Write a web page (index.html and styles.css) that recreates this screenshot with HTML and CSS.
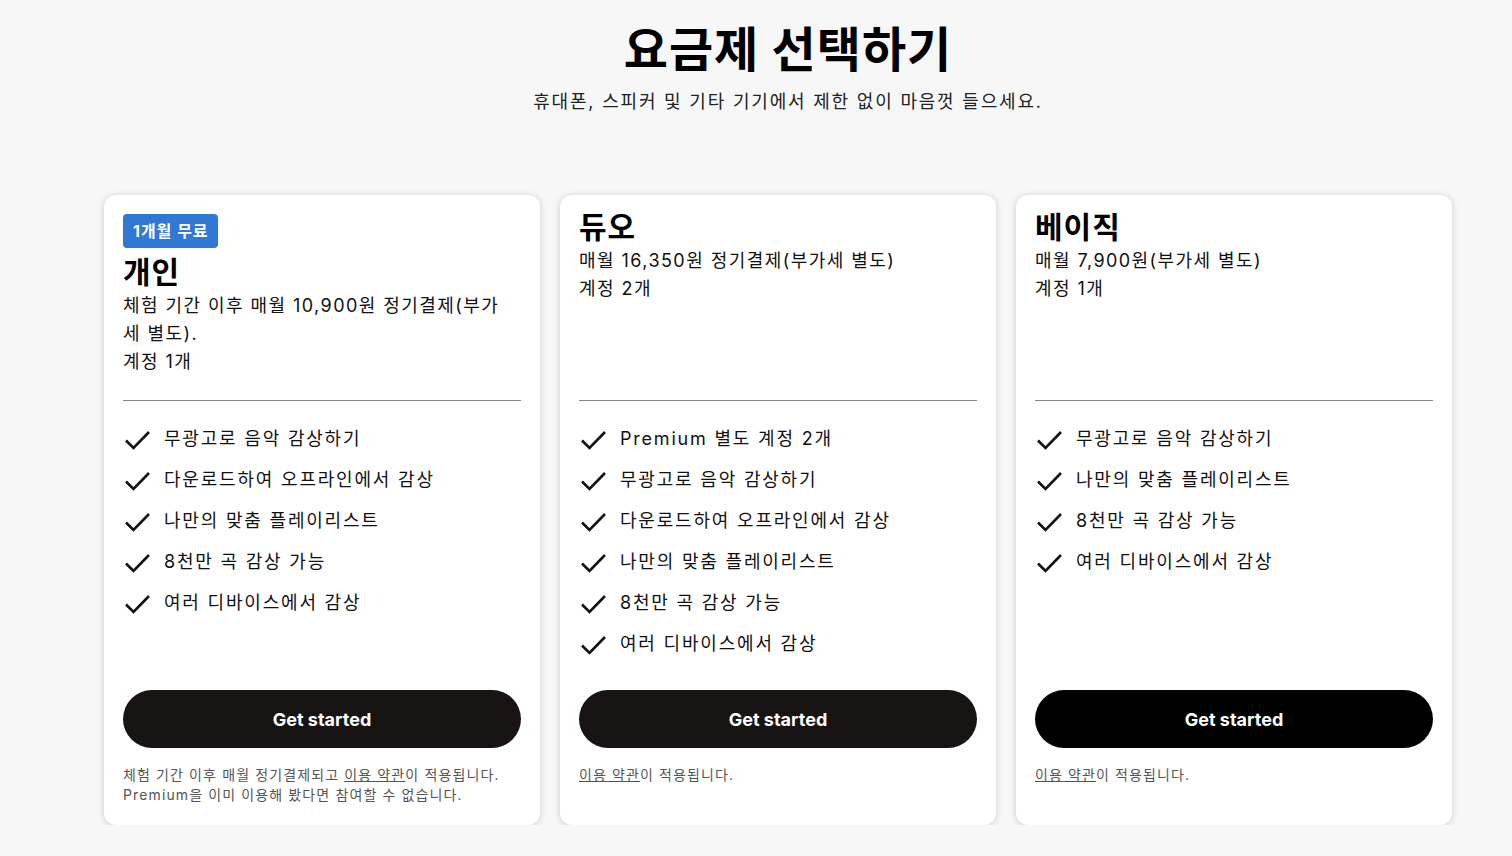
FILE: index.html
```html
<!DOCTYPE html>
<html lang="ko">
<head>
    <meta charset="UTF-8">
    <meta name="viewport" content="width=device-width, initial-scale=1.0">
    <title>요금제 선택하기</title>
    <link rel="stylesheet" href="styles.css">
</head>
<body>
    <header class="page-head">
        <h1>요금제 선택하기</h1>
        <p class="lead">휴대폰, 스피커 및 기타 기기에서 제한 없이 마음껏 들으세요.</p>
    </header>

    <main class="plans">
        <!-- 개인 -->
        <section class="plan">
            <div class="plan-head">
                <span class="badge">1개월 무료</span>
                <h2>개인</h2>
                <p class="plan-desc">체험 기간 이후 매월 10,900원 정기결제(부가세 별도).</p>
                <p class="plan-desc">계정 1개</p>
            </div>
            <ul class="features">
                <li><svg class="check" viewBox="0 0 28 22"><path d="M3 11.5l7.5 7.5L26 3"/></svg>무광고로 음악 감상하기</li>
                <li><svg class="check" viewBox="0 0 28 22"><path d="M3 11.5l7.5 7.5L26 3"/></svg>다운로드하여 오프라인에서 감상</li>
                <li><svg class="check" viewBox="0 0 28 22"><path d="M3 11.5l7.5 7.5L26 3"/></svg>나만의 맞춤 플레이리스트</li>
                <li><svg class="check" viewBox="0 0 28 22"><path d="M3 11.5l7.5 7.5L26 3"/></svg>8천만 곡 감상 가능</li>
                <li><svg class="check" viewBox="0 0 28 22"><path d="M3 11.5l7.5 7.5L26 3"/></svg>여러 디바이스에서 감상</li>
            </ul>
            <div class="plan-foot">
                <button type="button">Get started</button>
                <p class="terms">체험 기간 이후 매월 정기결제되고 <a href="#">이용 약관</a>이 적용됩니다.<br>Premium을 이미 이용해 봤다면 참여할 수 없습니다.</p>
            </div>
        </section>

        <!-- 듀오 -->
        <section class="plan">
            <div class="plan-head">
                <h2>듀오</h2>
                <p class="plan-desc">매월 16,350원 정기결제(부가세 별도)</p>
                <p class="plan-desc">계정 2개</p>
            </div>
            <ul class="features">
                <li><svg class="check" viewBox="0 0 28 22"><path d="M3 11.5l7.5 7.5L26 3"/></svg>Premium 별도 계정 2개</li>
                <li><svg class="check" viewBox="0 0 28 22"><path d="M3 11.5l7.5 7.5L26 3"/></svg>무광고로 음악 감상하기</li>
                <li><svg class="check" viewBox="0 0 28 22"><path d="M3 11.5l7.5 7.5L26 3"/></svg>다운로드하여 오프라인에서 감상</li>
                <li><svg class="check" viewBox="0 0 28 22"><path d="M3 11.5l7.5 7.5L26 3"/></svg>나만의 맞춤 플레이리스트</li>
                <li><svg class="check" viewBox="0 0 28 22"><path d="M3 11.5l7.5 7.5L26 3"/></svg>8천만 곡 감상 가능</li>
                <li><svg class="check" viewBox="0 0 28 22"><path d="M3 11.5l7.5 7.5L26 3"/></svg>여러 디바이스에서 감상</li>
            </ul>
            <div class="plan-foot">
                <button type="button">Get started</button>
                <p class="terms"><a href="#">이용 약관</a>이 적용됩니다.</p>
            </div>
        </section>

        <!-- 베이직 -->
        <section class="plan">
            <div class="plan-head">
                <h2>베이직</h2>
                <p class="plan-desc">매월 7,900원(부가세 별도)</p>
                <p class="plan-desc">계정 1개</p>
            </div>
            <ul class="features">
                <li><svg class="check" viewBox="0 0 28 22"><path d="M3 11.5l7.5 7.5L26 3"/></svg>무광고로 음악 감상하기</li>
                <li><svg class="check" viewBox="0 0 28 22"><path d="M3 11.5l7.5 7.5L26 3"/></svg>나만의 맞춤 플레이리스트</li>
                <li><svg class="check" viewBox="0 0 28 22"><path d="M3 11.5l7.5 7.5L26 3"/></svg>8천만 곡 감상 가능</li>
                <li><svg class="check" viewBox="0 0 28 22"><path d="M3 11.5l7.5 7.5L26 3"/></svg>여러 디바이스에서 감상</li>
            </ul>
            <div class="plan-foot">
                <button type="button" class="btn-dark">Get started</button>
                <p class="terms"><a href="#">이용 약관</a>이 적용됩니다.</p>
            </div>
        </section>
    </main>
</body>
</html>
```

FILE: styles.css
```css
body {
    font-family: Inter, "Noto Sans CJK KR", sans-serif;
    background-color: #f7f7f7;
    color: #111;
    margin: 0;
    padding: 0;
}
.page-head {
    padding: 20px 0 0 64px;
    text-align: center;
}
h1 {
    font-size: 48px;
    line-height: 60px;
    font-weight: 700;
    letter-spacing: 1px;
    color: #000;
    margin: 0 0 9px;
}
.lead {
    font-size: 18px;
    line-height: 26px;
    letter-spacing: 0.1em;
    color: #222;
    margin: 0;
}
.plans {
    display: flex;
    gap: 20px;
    margin: 80px 0 0 104px;
}
.plan {
    width: 436px;
    height: 630px;
    box-sizing: border-box;
    background-color: white;
    border-radius: 12px;
    box-shadow: 0 1px 7px rgba(0, 0, 0, 0.18);
    padding: 16px 19px 20px;
    display: flex;
    flex-direction: column;
}
.plan-head {
    height: 189px;
    border-bottom: 1px solid #878787;
}
.badge {
    display: inline-block;
    margin-top: 3px;
    background-color: #3078d4;
    color: white;
    font-size: 16px;
    font-weight: 700;
    line-height: 34px;
    letter-spacing: 1px;
    padding: 0 9px 0 10px;
    border-radius: 4px;
}
h2 {
    font-size: 30px;
    line-height: 32px;
    font-weight: 700;
    letter-spacing: 1px;
    color: #000;
    margin: 8px 0 4px;
}
.plan-head h2:first-child {
    margin-top: 0;
}
.plan-desc {
    font-size: 18px;
    line-height: 28px;
    letter-spacing: 0.08em;
    margin: 0;
    padding-right: 10px;
}
.features {
    list-style: none;
    margin: 0;
    padding: 15px 0 0;
    flex: 1;
}
.features li {
    display: flex;
    align-items: center;
    gap: 13px;
    height: 41px;
    font-size: 18px;
    letter-spacing: 0.1em;
}
.check {
    width: 28px;
    height: 22px;
    flex-shrink: 0;
    margin-top: 6px;
    fill: none;
    stroke: #111;
    stroke-width: 2.6;
}
.plan-foot {
    height: 115px;
}
button {
    display: block;
    width: 100%;
    height: 58px;
    border: none;
    border-radius: 29px;
    background-color: #181414;
    color: white;
    font-family: inherit;
    font-size: 18px;
    font-weight: 700;
    cursor: pointer;
}
.btn-dark {
    background-color: #000;
}
.terms {
    font-size: 14px;
    line-height: 20px;
    letter-spacing: 0.08em;
    color: #555;
    margin: 17px 0 0;
}
.terms a {
    color: #555;
    text-decoration: underline;
}
```
